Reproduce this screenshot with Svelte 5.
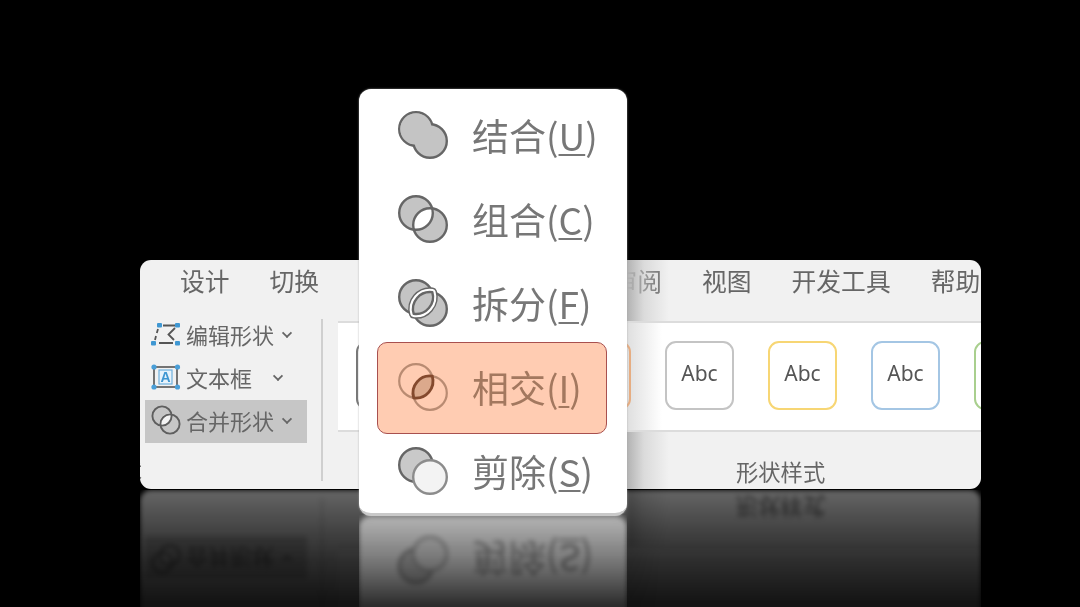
<script>
  const tabs = ['设计', '切换', '动画', '幻灯片放映', '审阅', '视图', '开发工具', '帮助'];
  const cards = ['#777', '#6fa8d8', '#e6ad82', '#c4c4c4', '#f7d674', '#a4c6e4', '#a9cf8e'];
  const lens = 'M15.7 34.84A17 17 0 0 1 34.3 13.16A17 17 0 0 1 15.7 34.84Z';
  const items = [
    { kind: 'union', label: '结合', key: 'U' },
    { kind: 'combine', label: '组合', key: 'C' },
    { kind: 'split', label: '拆分', key: 'F' },
    { kind: 'intersect', label: '相交', key: 'I', active: true },
    { kind: 'subtract', label: '剪除', key: 'S' }
  ];
</script>

{#snippet ribbon(mirror)}
  <div class="ribbon">
    <div class="tabs">
      {#if !mirror}
        {#each tabs as t}<span>{t}</span>{/each}
      {/if}
    </div>
    <div class="body">
      <div class="tools">
        <div class="tool">
          {#if !mirror}
            <svg class="ticon" viewBox="0 0 30 24" width="30" height="24">
              <g fill="none" stroke="#555" stroke-width="1.8">
                <path d="M12 3.5h12M24 6l-6.5 6.5L23 18M8 21h14M7 7 5.8 11M5 14 4 18" />
              </g>
              <g fill="#3f97d2">
                <rect x="6" y="1" width="5" height="4.6" rx="1" />
                <rect x="24" y="1" width="5" height="4.6" rx="1" />
                <rect x="0" y="19" width="5" height="4.6" rx="1" />
                <rect x="24" y="19" width="5" height="4.6" rx="1" />
              </g>
            </svg>
            <span class="tname">编辑形状</span><i class="chev"></i>
          {/if}
        </div>
        <div class="tool">
          {#if !mirror}
            <svg class="ticon" viewBox="0 0 30 26" width="30" height="26">
              <rect x="3" y="3" width="23" height="20" fill="none" stroke="#666" stroke-width="1.8" />
              <rect x="8" y="6" width="13" height="14" fill="#e8f3fb" stroke="#6fb1de" stroke-width="1.2" />
              <text x="14.5" y="18" text-anchor="middle" class="a">A</text>
              <g fill="#4a9fd8">
                <circle cx="3" cy="3" r="2.6" />
                <circle cx="26.5" cy="3" r="2.6" />
                <circle cx="3" cy="23" r="2.6" />
                <circle cx="26.5" cy="23" r="2.6" />
              </g>
            </svg>
            <span class="tname">文本框</span><i class="chev wide"></i>
          {/if}
        </div>
        <div class="tool on">
          <svg class="ticon" viewBox="0 0 30 30" width="30" height="30">
            <path d="M8.67 20.33A10 10 0 0 1 20.33 8.67A10 10 0 0 1 8.67 20.33Z" fill="#f4f4f4" />
            <circle cx="11" cy="11" r="9.6" fill="none" stroke="#5f5f5f" stroke-width="1.9" />
            <circle cx="19" cy="19" r="9.6" fill="none" stroke="#5f5f5f" stroke-width="1.9" />
          </svg>
          <span class="tname">合并形状</span><i class="chev"></i>
        </div>
      </div>
      <div class="divider"></div>
      <div class="styles">
        <div class="gallery">
          {#if !mirror}
            {#each cards as c}
              <div class="card" style:border-color={c}>Abc</div>
            {/each}
          {/if}
        </div>
        <div class="group">形状样式</div>
      </div>
    </div>
    {#if !mirror}<span class="clipped">插入形状</span>{/if}
    <div class="shade"></div>
  </div>
{/snippet}

{#snippet menu(mirror)}
  <div class="menu">
    {#each items as it, i}
      <div class="row" class:active={it.active && !mirror}>
        {#if !mirror || i === 4}
          <svg class="micon" viewBox="0 0 50 48" width="50" height="48">
            {#if it.kind === 'union'}
              <circle cx="18" cy="18" r="16.8" fill="#c4c4c4" stroke="#666" stroke-width="2.4" />
              <circle cx="32" cy="30" r="16.8" fill="#c4c4c4" stroke="#666" stroke-width="2.4" />
              <circle cx="18" cy="18" r="15.7" fill="#c4c4c4" />
            {:else if it.kind === 'combine'}
              <circle cx="18" cy="18" r="16.8" fill="#c4c4c4" />
              <circle cx="32" cy="30" r="16.8" fill="#c4c4c4" />
              <path d={lens} fill="#fff" />
              <circle cx="18" cy="18" r="16.8" fill="none" stroke="#666" stroke-width="2.4" />
              <circle cx="32" cy="30" r="16.8" fill="none" stroke="#666" stroke-width="2.4" />
            {:else if it.kind === 'split'}
              <circle cx="18" cy="18" r="16.8" fill="#c4c4c4" stroke="#666" stroke-width="2.4" />
              <circle cx="32" cy="30" r="16.8" fill="#c4c4c4" stroke="#666" stroke-width="2.4" />
              <path d={lens} fill="#c4c4c4" stroke="#666" stroke-width="9.4" stroke-linejoin="round" />
              <path d={lens} fill="#c4c4c4" stroke="#fff" stroke-width="6.6" stroke-linejoin="round" />
              <path d={lens} fill="#c4c4c4" stroke="#666" stroke-width="2.4" stroke-linejoin="round" />
            {:else if it.kind === 'intersect'}
              <path d={lens} fill="#dba98c" />
              <circle cx="18" cy="18" r="16.8" fill="none" stroke="#b98b72" stroke-width="2.2" />
              <circle cx="32" cy="30" r="16.8" fill="none" stroke="#b98b72" stroke-width="2.2" />
              <path d={lens} fill="none" stroke="#84492d" stroke-width="2.8" />
            {:else}
              <circle cx="18" cy="18" r="16.8" fill="#c9c9c9" stroke="#666" stroke-width="2.4" />
              <circle cx="32" cy="30" r="16.8" fill="#f3f3f3" stroke="#8c8c8c" stroke-width="2.4" />
            {/if}
          </svg>
          <span class="label">{it.label}(<u>{it.key}</u>)</span>
        {/if}
      </div>
    {/each}
  </div>
{/snippet}

<div class="stage">
  <div class="reflect rib" aria-hidden="true"><div class="flip">{@render ribbon(true)}</div></div>
  <div class="reflect men" aria-hidden="true"><div class="flip">{@render menu(true)}</div></div>
  <div class="real">
    {@render ribbon(false)}
    <div class="over">{@render menu(false)}</div>
  </div>
</div>

<style>
  :global(body) {
    margin: 0;
    background: #000;
  }
  .stage {
    position: relative;
    width: 1080px;
    height: 607px;
    overflow: hidden;
    background: #000;
    font-family: "Noto Sans CJK SC", "Noto Sans", sans-serif;
  }
  .real {
    padding: 260px 0 0 140px;
    filter: blur(0.4px);
  }
  .over {
    position: absolute;
    z-index: 2;
    left: 359px;
    top: 89px;
  }
  .ribbon {
    position: relative;
    width: 841px;
    height: 229px;
    border-radius: 11px;
    background: #f1f1f1;
    overflow: hidden;
    color: #666;
  }
  .tabs {
    display: flex;
    gap: 40px;
    height: 61px;
    padding: 0 0 0 40px;
    box-sizing: border-box;
    font-size: 24.77px;
    line-height: 40px;
    white-space: nowrap;
  }
  .body {
    display: flex;
    height: 168px;
  }
  .tools {
    width: 162px;
    margin: -7px 0 0 5px;
    flex: none;
  }
  .tool {
    display: flex;
    align-items: center;
    height: 43px;
    font-size: 22px;
    line-height: 1;
    white-space: nowrap;
    color: #666;
  }
  .tool.on {
    background: #c6c6c6;
  }
  .tname {
    padding-bottom: 3px;
  }
  .ticon {
    flex: none;
    margin: -3px 5px 0 6px;
  }
  .a {
    font: 700 14px "Liberation Sans", sans-serif;
    fill: #3f97d2;
  }
  .chev {
    width: 6px;
    height: 6px;
    margin: -6px 0 0 9px;
    border: solid #666;
    border-width: 0 2px 2px 0;
    transform: rotate(45deg) scale(0.9);
  }
  .chev.wide {
    margin-left: 22px;
  }
  .divider {
    flex: none;
    width: 2px;
    height: 162px;
    margin: -2px 15px 0 14px;
    background: #cfcfcf;
  }
  .styles {
    flex: 1;
    min-width: 0;
  }
  .gallery {
    position: relative;
    z-index: 1;
    display: flex;
    gap: 34px;
    height: 111px;
    padding: 18px 0 0 18px;
    box-sizing: border-box;
    background: linear-gradient(90deg, #dedede, #fff) no-repeat 288px 0 / 36px 100%, #fff;
    border-top: 2px solid #dcdcdc;
    border-bottom: 2px solid #dcdcdc;
    overflow: hidden;
  }
  .card {
    flex: none;
    width: 69px;
    height: 69px;
    box-sizing: border-box;
    border: 2px solid;
    border-radius: 11px;
    padding-top: 15px;
    text-align: center;
    font: 21px/30px "Noto Sans", sans-serif;
    color: #555;
  }
  .group {
    padding: 24px 0 0 398px;
    font-size: 22.3px;
    line-height: 30px;
    color: #666;
    white-space: nowrap;
  }
  .clipped {
    position: absolute;
    left: -86px;
    top: 195px;
    font-size: 22px;
    line-height: 24px;
    white-space: nowrap;
  }
  .shade {
    position: absolute;
    left: 487px;
    top: 0;
    width: 42px;
    height: 100%;
    background: linear-gradient(90deg, #b2b2b2, rgba(200, 200, 200, 0.55) 40%, rgba(230, 230, 230, 0));
  }
  .menu {
    width: 268px;
    height: 427px;
    box-sizing: border-box;
    padding-top: 6px;
    border-radius: 12px;
    background: #fff;
    border-bottom: 3px solid #c9c9c9;
    box-shadow: 0 0 2px rgba(170, 170, 170, 0.9);
  }
  .row {
    position: relative;
    display: flex;
    align-items: center;
    gap: 24px;
    height: 84px;
    padding-left: 39px;
    color: #777;
  }
  .row.active {
    color: #a3785f;
  }
  .row.active::before {
    content: "";
    position: absolute;
    left: 18px;
    right: 20px;
    top: -5px;
    bottom: -3px;
    box-sizing: border-box;
    border: 1px solid #a8504f;
    border-radius: 10px;
    background: #ffccb2;
  }
  .micon,
  .label {
    position: relative;
  }
  .micon {
    flex: none;
    margin-top: -4px;
    overflow: visible;
  }
  .label {
    padding-bottom: 3px;
    font-size: 37px;
    line-height: 1;
    white-space: nowrap;
  }
  u {
    text-decoration-thickness: 2px;
    text-underline-offset: 3px;
  }
  .reflect {
    position: absolute;
    overflow: hidden;
  }
  .flip {
    transform: scaleY(-1);
    filter: blur(2.6px);
  }
  .rib {
    left: 140px;
    top: 490px;
    width: 841px;
    height: 229px;
    mask-image: linear-gradient(rgba(0, 0, 0, 0.42), rgba(0, 0, 0, 0.28) 40px, rgba(0, 0, 0, 0.18) 70px, rgba(0, 0, 0, 0.08) 112px);
  }
  .men {
    left: 359px;
    top: 515px;
    width: 268px;
    height: 427px;
    mask-image: linear-gradient(rgba(0, 0, 0, 0.58), rgba(0, 0, 0, 0.34) 48px, rgba(0, 0, 0, 0.1) 92px);
  }
</style>
